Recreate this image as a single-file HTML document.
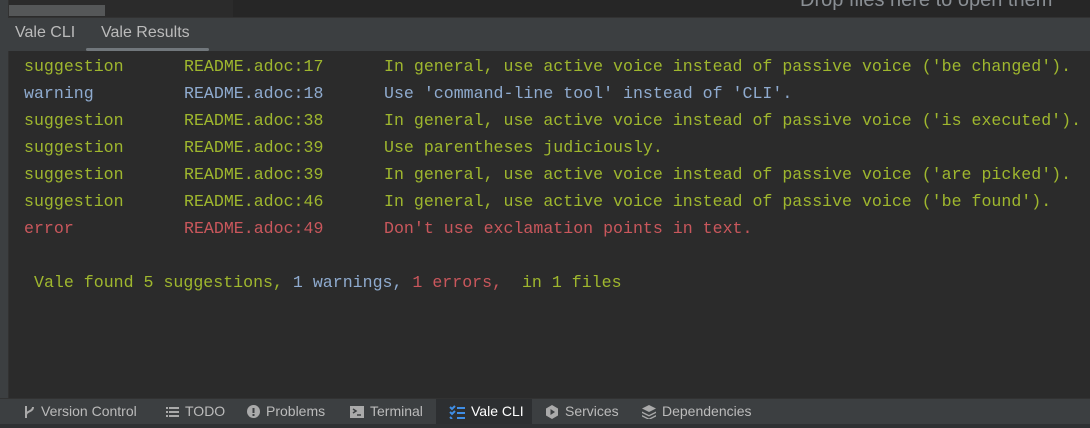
<!DOCTYPE html>
<html><head><style>
*{margin:0;padding:0;box-sizing:border-box}
body{width:1090px;height:428px;background:#2b2b2b;position:relative;overflow:hidden;font-family:"Liberation Sans",sans-serif}
.abs{position:absolute}
.mono{font-family:"Liberation Mono",monospace;font-size:16.6px;white-space:pre;position:absolute}
.g{color:#9fb72e}.b{color:#8fabcf}.r{color:#c9575c}
.bt{position:absolute;top:398px;height:27px;line-height:27px;font-size:14px;color:#bbbbbb;display:flex;align-items:center;gap:6px}
</style></head><body>
<div class="abs" style="left:0;top:0;width:8px;height:428px;background:#3c3f41"></div>
<div class="abs" style="left:8px;top:0;width:1px;height:398px;background:#323232"></div>
<div class="abs" style="left:9px;top:5px;width:96px;height:11px;background:#555758"></div>
<div class="abs" style="left:233px;top:0;width:857px;height:17px;background:#262626"></div>
<div class="abs" style="left:800px;top:-11px;font-size:20px;color:#8a8f94">Drop files here to open them</div>
<div class="abs" style="left:8px;top:17px;width:1082px;height:34px;background:#3c3f41;border-top:1px solid #323232"></div>
<div class="abs" style="left:15px;top:24px;font-size:16px;color:#bbbbbb">Vale CLI</div>
<div class="abs" style="left:101px;top:24px;font-size:16px;color:#bbbbbb">Vale Results</div>
<div class="abs" style="left:86px;top:48px;width:123px;height:3px;border-radius:2px;background:#71777c"></div>

<div class="mono g" style="left:24px;top:57px">suggestion</div><div class="mono g" style="left:184px;top:57px">README.adoc:17</div><div class="mono g" style="left:384px;top:57px">In general, use active voice instead of passive voice ('be changed').</div>
<div class="mono b" style="left:24px;top:84px">warning</div><div class="mono b" style="left:184px;top:84px">README.adoc:18</div><div class="mono b" style="left:384px;top:84px">Use 'command-line tool' instead of 'CLI'.</div>
<div class="mono g" style="left:24px;top:111px">suggestion</div><div class="mono g" style="left:184px;top:111px">README.adoc:38</div><div class="mono g" style="left:384px;top:111px">In general, use active voice instead of passive voice ('is executed').</div>
<div class="mono g" style="left:24px;top:138px">suggestion</div><div class="mono g" style="left:184px;top:138px">README.adoc:39</div><div class="mono g" style="left:384px;top:138px">Use parentheses judiciously.</div>
<div class="mono g" style="left:24px;top:165px">suggestion</div><div class="mono g" style="left:184px;top:165px">README.adoc:39</div><div class="mono g" style="left:384px;top:165px">In general, use active voice instead of passive voice ('are picked').</div>
<div class="mono g" style="left:24px;top:192px">suggestion</div><div class="mono g" style="left:184px;top:192px">README.adoc:46</div><div class="mono g" style="left:384px;top:192px">In general, use active voice instead of passive voice ('be found').</div>
<div class="mono r" style="left:24px;top:219px">error</div><div class="mono r" style="left:184px;top:219px">README.adoc:49</div><div class="mono r" style="left:384px;top:219px">Don't use exclamation points in text.</div>
<div class="mono" style="left:34px;top:273px"><span class="g">Vale found 5 suggestions, </span><span class="b">1 warnings, </span><span class="r">1 errors, </span><span class="g"> in 1 files</span></div>

<div class="abs" style="left:0;top:398px;width:1090px;height:30px;background:#3c3f41;border-top:1px solid #323232"></div>
<div class="abs" style="left:0;top:424px;width:1090px;height:4px;background:#2f3133"></div>
<div class="abs" style="left:436px;top:399px;width:96px;height:25px;background:#2d2f31"></div>
<div class="bt" style="left:24px"><svg width="11" height="14" viewBox="0 0 11 14"><path d="M2 1v12M2 10c0-4 7-3 7-8" stroke="#aaa" stroke-width="2" fill="none"/></svg>Version Control</div>
<div class="bt" style="left:166px"><svg width="13" height="12"><g fill="#aaa"><rect y="1" width="2" height="2"/><rect x="3" y="1" width="10" height="2"/><rect y="5" width="2" height="2"/><rect x="3" y="5" width="10" height="2"/><rect y="9" width="2" height="2"/><rect x="3" y="9" width="10" height="2"/></g></svg>TODO</div>
<div class="bt" style="left:247px"><svg width="13" height="13"><circle cx="6.5" cy="6.5" r="6.5" fill="#aaa"/><rect x="5.5" y="3" width="2" height="5" fill="#3c3f41"/><rect x="5.5" y="9" width="2" height="2" fill="#3c3f41"/></svg>Problems</div>
<div class="bt" style="left:350px"><svg width="14" height="12"><rect width="14" height="12" fill="#aaa"/><path d="M3 3l3 2-3 2M7 9h4" stroke="#3c3f41" stroke-width="1.5" fill="none"/></svg>Terminal</div>
<div class="bt" style="left:449px;color:#ffffff"><svg width="16" height="14"><g stroke="#3f8ee6" stroke-width="2" fill="none"><path d="M1 2l2 2 3-3M1 7l2 2 3-3M1 12l2 2"/><path d="M8 3h8M8 8h8M8 13h8"/></g></svg>Vale CLI</div>
<div class="bt" style="left:545px"><svg width="14" height="14"><polygon points="7,0 13,3.5 13,10.5 7,14 1,10.5 1,3.5" fill="#aaa"/><polygon points="5.5,4 10,7 5.5,10" fill="#3c3f41"/></svg>Services</div>
<div class="bt" style="left:642px"><svg width="14" height="14"><g fill="#aaa"><polygon points="7,0 14,3.5 7,7 0,3.5"/><path d="M0 6.5l7 3.5 7-3.5v1.5l-7 3.5-7-3.5z"/><path d="M0 10l7 3.5 7-3.5v1.5l-7 3.5-7-3.5z"/></g></svg>Dependencies</div>
</body></html>
